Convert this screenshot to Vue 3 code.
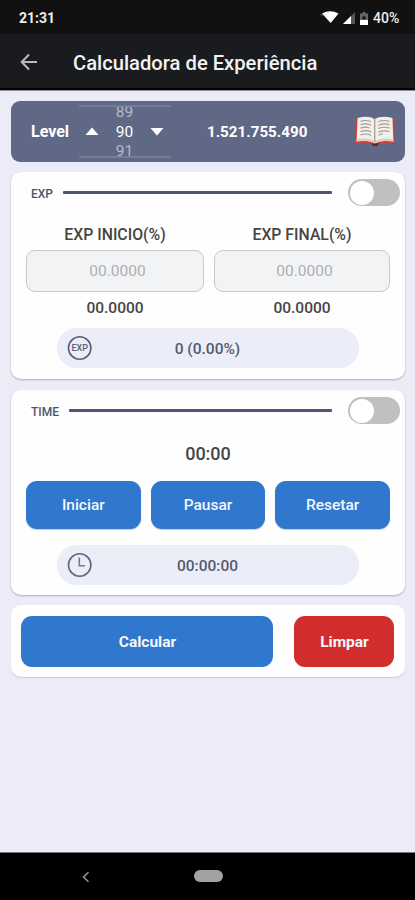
<script setup>
import { ref } from 'vue'

const level = ref(90)
const fields = [
  { label: 'EXP INICIO(%)', value: '00.0000' },
  { label: 'EXP FINAL(%)', value: '00.0000' },
]
const timerActions = ['Iniciar', 'Pausar', 'Resetar']
const expOn = ref(false)
const timeOn = ref(false)
</script>

<template>
  <div class="screen">
    <div class="status">
      <span class="clock">21:31</span>
      <svg class="wifi" width="20" height="14" viewBox="0 0 20 14">
        <path d="M2 3.600Q10-1 18.500 3.600L10.700 13Z" fill="#fff" />
        <path d="M.8 4.200L2.500 6" stroke="#777" stroke-width="1" />
      </svg>
      <svg class="signal" width="12" height="12" viewBox="0 0 12 12">
        <path d="M12 0V12H0Z" fill="#555" />
        <path d="M8 4V12H0Z" fill="#fff" />
      </svg>
      <svg class="battery" width="8" height="13" viewBox="0 0 8 13">
        <path d="M2.5 0h3v1.5H8V13H0V1.500h2.500Z" fill="#666" />
        <path d="M0 8h8v5H0Z" fill="#fff" />
        <path d="M2.200 5.200L4 3.500l1.800 1.700v2H2.200Z" fill="#181818" />
      </svg>
      <span class="percent">40%</span>
    </div>

    <header class="appbar">
      <svg class="back" width="18" height="18" viewBox="0 0 18 18">
        <path d="M17 9H2M9 1.500L1.700 9L9 16.500" fill="none" stroke="#b9babc" stroke-width="2" />
      </svg>
      <h1>Calculadora de Experiência</h1>
    </header>

    <main>
      <section class="level">
        <span class="level-label">Level</span>
        <div class="picker">
          <svg class="up" width="14" height="8" viewBox="0 0 14 8"><path d="M7 .5L13.500 8H.5Z" fill="#fff" /></svg>
          <div class="wheel">
            <span class="dim">{{ level - 1 }}</span>
            <span>{{ level }}</span>
            <span class="dim">{{ level + 1 }}</span>
          </div>
          <svg width="14" height="8" viewBox="0 0 14 8"><path d="M.5 0H13.500L7 7.500Z" fill="#fff" /></svg>
        </div>
        <span class="total">1.521.755.490</span>
        <svg class="book" width="42" height="31" viewBox="0 0 42 32">
          <path d="M1 5Q0 4 2 3H40Q42 4 41 6V29H24Q21 33 18 29H1Z" fill="#d63c37" />
          <path d="M17 28H25L23.500 31H19Z" fill="#701d24" />
          <path d="M3 2Q14-1 20.500 3V28Q14 24 2 26Z" fill="#f3eee8" />
          <path d="M20.500 3Q28-1 39 2L40 26Q28 24 20.500 28Z" fill="#f3eee8" />
          <path d="M2 24Q14 21.500 20.500 26Q28 21.500 40 24V26.500Q28 24.500 20.500 28.500Q14 24.500 2 26.500Z" fill="#d6cfc9" />
          <path d="M20.700 3V27" stroke="#a9a29d" stroke-width="1.400" />
          <path
            d="M6 5.500Q12 3.500 17 6M6 9Q12 7 17 9.500M6 12.500Q12 10.500 15 12.500M6 16Q12 14 17 16.500M6 19.500Q12 17.500 17 20M24.500 6Q30 3.500 36 5.500M24.500 9.500Q30 7 36 9M24.500 13Q30 10.500 36 12.500M24.500 16.500Q30 14.500 36 16M24.500 20Q26 18.500 29 18.500"
            fill="none" stroke="#a39c98" stroke-width="1.200"
          />
        </svg>
      </section>

      <section class="card exp">
        <div class="card-head">
          <span class="tag">EXP</span>
          <i class="rule"></i>
          <button class="toggle" :class="{ on: expOn }" aria-label="EXP" @click="expOn = !expOn"><i></i></button>
        </div>
        <div class="fields">
          <div v-for="f in fields" :key="f.label" class="field">
            <label>{{ f.label }}</label>
            <div class="input">00.0000</div>
            <span class="value">{{ f.value }}</span>
          </div>
        </div>
        <div class="pill">
          <svg class="pill-icon" width="26" height="26" viewBox="0 0 26 26">
            <circle cx="12.700" cy="13" r="11.200" fill="none" stroke="#5b6078" stroke-width="1.600" />
            <text x="12.700" y="16.200" text-anchor="middle" class="exp-text">EXP</text>
          </svg>
          <span class="exp-result">0 (0.00%)</span>
        </div>
      </section>

      <section class="card time">
        <div class="card-head">
          <span class="tag">TIME</span>
          <i class="rule"></i>
          <button class="toggle" :class="{ on: timeOn }" aria-label="TIME" @click="timeOn = !timeOn"><i></i></button>
        </div>
        <div class="timer">00:00</div>
        <div class="actions">
          <button v-for="a in timerActions" :key="a" class="btn">{{ a }}</button>
        </div>
        <div class="pill">
          <svg class="pill-icon" width="26" height="26" viewBox="0 0 26 26">
            <circle cx="12.700" cy="13" r="11.200" fill="none" stroke="#62667a" stroke-width="1.600" />
            <path d="M12.300 5.500V13.700H18" fill="none" stroke="#777b8d" stroke-width="1.600" />
          </svg>
          <span class="time-result">00:00:00</span>
        </div>
      </section>

      <section class="card footer">
        <button class="btn calc">Calcular</button>
        <button class="btn clear">Limpar</button>
      </section>
    </main>

    <nav>
      <svg class="nav-back" width="8" height="12" viewBox="0 0 8 12">
        <path d="M6.500 1.200L1.500 6L6.500 10.800" fill="none" stroke="#999" stroke-width="1.500" />
      </svg>
      <i class="home"></i>
    </nav>
  </div>
</template>

<style>
body {
  margin: 0;
  background: #ebecf8;
}
</style>

<style scoped>
* {
  box-sizing: border-box;
}
.screen {
  display: flex;
  flex-direction: column;
  width: 415px;
  height: 900px;
  overflow: hidden;
  background: #ebecf8;
  font-family: Roboto, sans-serif;
}
button {
  border: 0;
  padding: 0;
  font-family: inherit;
}
.status {
  display: flex;
  align-items: center;
  height: 34px;
  flex: none;
  padding: 2px 15px 0 19px;
  background: #111;
  color: #eee;
}
.clock {
  flex: 1;
  font-size: 14px;
  font-weight: 700;
}
.wifi {
  margin: 0 3px 2px 0;
}
.signal {
  margin-right: 5px;
}
.battery {
  margin-right: 5px;
}
.percent {
  width: 27px;
  font-size: 14px;
  font-weight: 500;
  white-space: nowrap;
}
.appbar {
  display: flex;
  align-items: center;
  flex: none;
  height: 57px;
  padding: 0 20px;
  background: #1a1b1e;
  border-bottom: 1px solid #8f9094;
  box-shadow: inset 0 -2px #030303;
}
h1 {
  margin: 2px 0 0 35px;
  color: #f2f2f2;
  font-size: 20.200px;
  font-weight: 500;
  line-height: 24px;
  white-space: nowrap;
}
main {
  display: flex;
  flex-direction: column;
  flex: 1;
  padding: 10px 10px 0 11px;
}
.level {
  display: flex;
  align-items: center;
  height: 61px;
  padding: 0 9px 0 20px;
  border-radius: 9px;
  background: #5f6985;
  color: #fff;
}
.level-label {
  width: 48px;
  font-size: 16px;
  font-weight: 700;
}
.picker {
  display: flex;
  align-items: center;
  justify-content: space-between;
  width: 92px;
  height: 53px;
  padding: 0 7px 0 6px;
  border-top: 2px solid #747d97;
  border-bottom: 2px solid #747d97;
}
.up {
  margin-bottom: 2px;
}
.wheel {
  display: flex;
  flex-direction: column;
  align-items: center;
  justify-content: center;
  height: 49px;
  padding-top: 2px;
  overflow: hidden;
  font-size: 15.500px;
  line-height: 19.500px;
}
.wheel span {
  flex: none;
}
.wheel .dim {
  color: #b4bacb;
}
.total {
  margin-left: 36px;
  font-size: 15.200px;
  font-weight: 700;
}
.book {
  margin: 0 0 1px auto;
}
.card {
  border-radius: 10px;
  background: #fefefe;
  box-shadow: 0 1px 2px rgba(0, 0, 0, 0.27);
}
.exp {
  height: 207px;
  margin-top: 10px;
}
.time {
  height: 205px;
  margin-top: 11px;
}
.card-head {
  display: flex;
  align-items: center;
  height: 41px;
  padding: 0 5px 0 20px;
}
.tag {
  padding-top: 2px;
  color: #4d5470;
  font-size: 12px;
  font-weight: 500;
}
.rule {
  flex: 1;
  height: 3px;
  margin: 0 16px 0 10px;
  border-radius: 1px;
  background: #4b5578;
}
.time .rule {
  margin-bottom: 1px;
}
.toggle {
  display: flex;
  width: 52px;
  height: 27px;
  padding: 1.500px;
  border-radius: 14px;
  background: #c0c0c0;
}
.toggle i {
  width: 24px;
  height: 24px;
  border-radius: 50%;
  background: #fff;
}
.toggle.on {
  justify-content: flex-end;
  background: #3077ce;
}
.fields {
  display: grid;
  grid-template-columns: 178px 176px;
  gap: 10px;
  padding: 12px 0 0 15px;
}
.field {
  display: flex;
  flex-direction: column;
  align-items: center;
  color: #454545;
}
label {
  font-size: 15.800px;
  font-weight: 500;
  line-height: 20px;
}
.input {
  width: 100%;
  height: 42px;
  margin-top: 5px;
  padding-left: 5px;
  border: 1px solid #c7c9c9;
  border-radius: 9px;
  background: #f2f3f5;
  color: #acafb2;
  font-size: 15.500px;
  line-height: 41px;
  text-align: center;
}
.value {
  margin-top: 6px;
  font-size: 15.500px;
  font-weight: 500;
  line-height: 20px;
}
.pill {
  display: flex;
  align-items: center;
  width: 302px;
  height: 40px;
  margin: 10px 0 0 46px;
  padding-left: 10px;
  border-radius: 20px;
  background: #ebedf8;
  color: #555a70;
  font-size: 15.500px;
  font-weight: 500;
}
.pill span {
  flex: 1;
  padding-right: 37px;
  padding-top: 1px;
  text-align: center;
}
.exp-text {
  fill: #5b6078;
  font-size: 9px;
  font-weight: 500;
}
.timer {
  padding-top: 12px;
  color: #454545;
  font-size: 18px;
  font-weight: 500;
  line-height: 22px;
  text-align: center;
}
.actions {
  display: flex;
  gap: 10px;
  padding: 16px 15px 0;
}
.btn {
  flex: 1;
  height: 49px;
  border-radius: 11px;
  background: #3077ce;
  color: #f3f7fc;
  font-size: 15.500px;
  font-weight: 500;
}
.actions .btn {
  height: 48px;
  box-shadow: 0 1px 1px rgba(30, 90, 170, 0.3);
}
.time .pill {
  margin-top: 16px;
}
.footer {
  display: flex;
  align-items: center;
  gap: 21px;
  height: 72px;
  margin-top: 10px;
  padding: 0 11px 0 10px;
  box-shadow: 0 1px 1px rgba(0, 0, 0, 0.14);
}
.footer .btn {
  height: 51px;
  padding: 2px 0 0 1px;
  font-weight: 700;
}
.footer .clear {
  flex: none;
  width: 100px;
  background: #d22d2d;
}
nav {
  display: flex;
  align-items: center;
  flex: none;
  height: 48px;
  padding-left: 82px;
  border-top: 1px solid #77777b;
  background: #000;
}
.home {
  width: 29px;
  height: 12px;
  margin-left: 104px;
  margin-bottom: 1px;
  border-radius: 6px;
  background: #a2a2a2;
}
</style>
